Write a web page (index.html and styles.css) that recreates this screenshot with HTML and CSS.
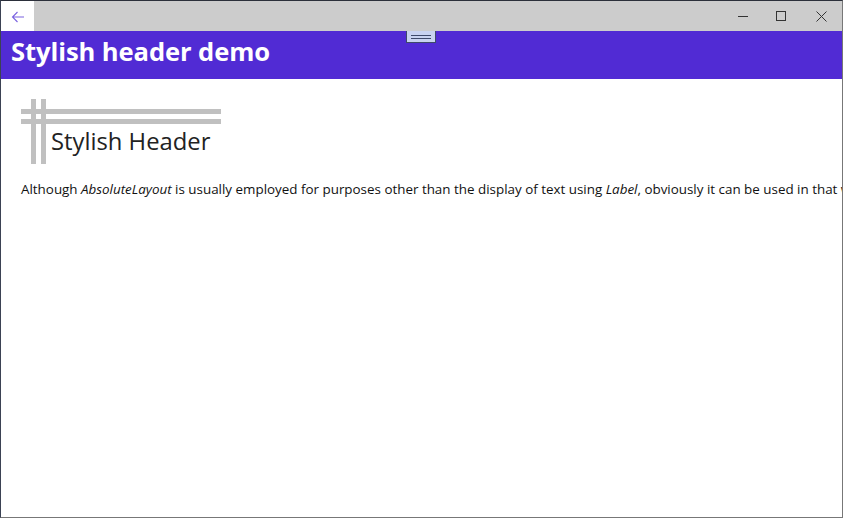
FILE: index.html
```html
<!DOCTYPE html>
<html>
<head>
<meta charset="utf-8">
<link rel="stylesheet" href="styles.css">
</head>
<body>
<div class="window">
  <div class="titlebar">
    <div class="back">
      <svg width="14" height="12" viewBox="0 0 14 12"><path d="M13 6H1.5M6.5 1L1.5 6l5 5" fill="none" stroke="#7a62e0" stroke-width="1.1"/></svg>
    </div>
    <div class="spacer"></div>
    <div class="caption">
      <svg width="10" height="10" viewBox="0 0 10 10"><path d="M0 5.5h10" stroke="#333" stroke-width="1"/></svg>
    </div>
    <div class="caption">
      <svg width="10" height="10" viewBox="0 0 10 10"><rect x="0.5" y="0.5" width="9" height="9" fill="none" stroke="#333" stroke-width="1"/></svg>
    </div>
    <div class="caption">
      <svg width="11" height="11" viewBox="0 0 11 11"><path d="M0.5 0.5l10 10M10.5 0.5l-10 10" stroke="#333" stroke-width="1"/></svg>
    </div>
  </div>
  <div class="header">
    <h1 class="header-title">Stylish header demo</h1>
    <div class="grip"><span></span><span></span></div>
  </div>
  <div class="content">
    <div class="stylish">
      <div class="hbar hbar1"></div>
      <div class="hbar hbar2"></div>
      <div class="vbar vbar1"></div>
      <div class="vbar vbar2"></div>
      <div class="stylish-text">Stylish Header</div>
    </div>
    <p class="para">Although <i>AbsoluteLayout</i> is usually employed for purposes other than the display of text using <i>Label</i>, obviously it can be used in that way.</p>
  </div>
</div>
</body>
</html>
```
FILE: styles.css
```css
html, body {
  margin: 0;
  padding: 0;
  background: #ffffff;
}
.window {
  width: 843px;
  height: 518px;
  box-sizing: border-box;
  border-top: 1px solid #2b2f3a;
  border-left: 1px solid #3b4254;
  border-right: 1px solid #777777;
  border-bottom: 1px solid #777777;
  display: flex;
  flex-direction: column;
  overflow: hidden;
  position: relative;
}
.titlebar {
  height: 30px;
  display: flex;
  background: #cccccc;
  flex: none;
}
.back {
  width: 33px;
  background: #ffffff;
  display: flex;
  align-items: center;
  justify-content: center;
  padding-top: 1px;
  box-sizing: border-box;
}
.spacer { flex: 1; }
.caption {
  width: 38px;
  display: flex;
  align-items: center;
  justify-content: center;
}
.caption:last-child { width: 42px; }
.header {
  height: 48px;
  background: #512bd4;
  position: relative;
  flex: none;
}
.header-title {
  margin: 0;
  padding: 4px 0 0 10px;
  color: #ffffff;
  font-family: "Open Sans", "Noto Sans", sans-serif;
  font-weight: 700;
  font-size: 25.6px;
  line-height: 34px;
  letter-spacing: -0.1px;
}
.grip {
  position: absolute;
  left: 405px;
  top: 0;
  width: 28px;
  height: 11px;
  background: #c8d3f0;
  border: 1px solid #3e4a6a;
  border-top: none;
  display: flex;
  flex-direction: column;
  align-items: center;
  justify-content: center;
  gap: 2px;
}
.grip span {
  display: block;
  width: 20px;
  height: 1px;
  background: #3e4a6a;
}
.content {
  flex: 1;
  padding: 0 0 0 20px;
  overflow: hidden;
}
.stylish {
  position: relative;
  width: 200px;
  height: 66px;
  margin-top: 20px;
}
.hbar {
  position: absolute;
  left: 0;
  width: 200px;
  height: 5px;
  background: #c0c0c0;
}
.hbar1 { top: 10px; }
.hbar2 { top: 20px; }
.vbar {
  position: absolute;
  top: 0;
  width: 5px;
  height: 65px;
  background: #c0c0c0;
}
.vbar1 { left: 10px; }
.vbar2 { left: 20px; }
.stylish-text {
  position: absolute;
  left: 30px;
  top: 26px;
  font-family: "Open Sans", "Noto Sans", sans-serif;
  font-size: 23.8px;
  line-height: 32px;
  color: #222222;
}
.para {
  margin: 15px 0 0 0;
  white-space: nowrap;
  font-family: "Open Sans", "Noto Sans", sans-serif;
  font-size: 13.4px;
  line-height: 19px;
  color: #111111;
}
```
